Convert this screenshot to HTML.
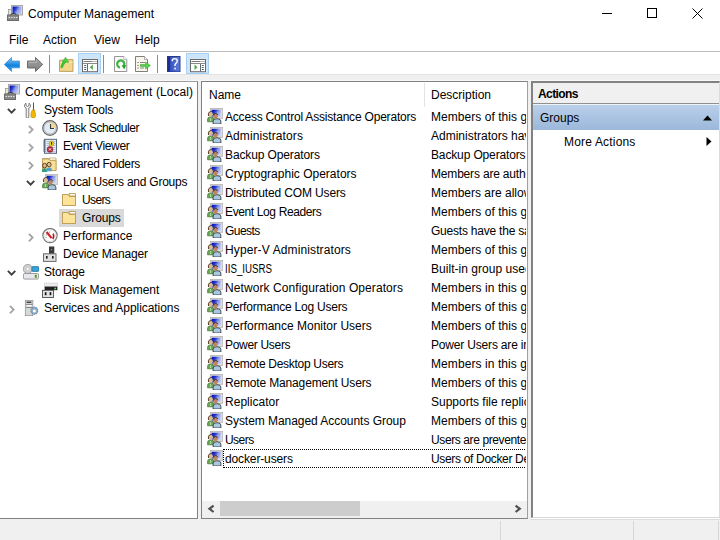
<!DOCTYPE html>
<html><head><meta charset="utf-8"><style>
*{margin:0;padding:0;box-sizing:border-box}
html,body{width:720px;height:540px;overflow:hidden;background:#f0f0f0;font-family:"Liberation Sans",sans-serif;font-size:12px;color:#000}
.a{position:absolute;white-space:nowrap}
.t{position:absolute;white-space:nowrap;line-height:14px}
svg{position:absolute;overflow:visible}
</style></head><body>

<svg width="0" height="0" style="position:absolute">
<defs>
<linearGradient id="scr" x1="0" y1="0" x2="1" y2="0.5"><stop offset="0" stop-color="#0008b0"/><stop offset="0.4" stop-color="#2a3ad0"/><stop offset="0.65" stop-color="#8c9ae8"/><stop offset="1" stop-color="#b8c2f0"/></linearGradient>
<linearGradient id="blu" x1="0" y1="0" x2="0" y2="1"><stop offset="0" stop-color="#8ed2fa"/><stop offset="0.55" stop-color="#1282dc"/><stop offset="1" stop-color="#48a8ec"/></linearGradient>
<linearGradient id="gry" x1="0" y1="0" x2="0" y2="1"><stop offset="0" stop-color="#a6a6a6"/><stop offset="1" stop-color="#7e7e7e"/></linearGradient>
<symbol id="grp" viewBox="0 0 16 16">
 <rect x="3.3" y="0.3" width="12.6" height="10" fill="#d4d4d4" stroke="#a8a8a8" stroke-width="0.6"/>
 <rect x="4.7" y="1.8" width="9.3" height="7.2" fill="url(#scr)"/>
 <path d="M14 1.8 v7.2 h-9.3" fill="none" stroke="#f0f0f0" stroke-width="0.6"/>
 <path d="M0.6 13.8 v-2.6 q0-2.3 3-2.3 q3.2 0 3.2 2.3 v2.6z" fill="#6aa858" stroke="#3e7430" stroke-width="0.7"/>
 <path d="M3.6 10 v3" stroke="#c8e8c0" stroke-width="0.8"/>
 <ellipse cx="3.6" cy="6.3" rx="2.3" ry="2.5" fill="#dcbc8c"/>
 <path d="M1.6 8 q-0.8-2.6 0.6-3.8 q1-0.8 2.6-0.6" fill="none" stroke="#3e2c1a" stroke-width="0.9"/>
 <path d="M6.1 16 v-3 q0-2.3 3.9-2.3 q3.9 0 3.9 2.3 v3z" fill="#a8c8e2" stroke="#1a1a1a" stroke-width="0.7"/>
 <ellipse cx="8.5" cy="8.2" rx="2.1" ry="2.5" fill="#b88660"/>
 <path d="M6.5 7.2 q0.6-1.8 2.2-1.7 q1.6 0.1 2 1.6" fill="none" stroke="#4a3020" stroke-width="0.9"/>
</symbol>
<symbol id="fold" viewBox="0 0 16 16">
 <path d="M1.5 2.5 h5.5 l1.5 1.5 h6 v9.5 h-13z" fill="#f3d27a" stroke="#c1a05a"/>
 <path d="M8 1.5 h6.5 v2.5 h-6z" fill="#fff" stroke="#c1a05a"/>
 <path d="M1.5 2.5 h5.5 l1.5 2 h6 v9 h-13z" fill="#fbe39a" stroke="#bf9e58"/>
</symbol>
<symbol id="cmp" viewBox="0 0 16 16">
 <rect x="4.5" y="0.5" width="11" height="9.5" fill="#e4e4e4" stroke="#a8a8a8"/>
 <rect x="5.5" y="1.5" width="9" height="7.5" fill="url(#scr)"/>
 <rect x="1.5" y="4.5" width="3" height="6" fill="#dfe8c8" stroke="#909090" stroke-width="0.7"/>
 <path d="M3.5 9.5 q3-2 6 0" fill="none" stroke="#222" stroke-width="1"/>
 <rect x="0.5" y="10" width="11" height="5.5" fill="#8a8a8a" stroke="#6a6a6a"/>
 <path d="M1.5 12.5 h9" stroke="#e0e0e0" stroke-width="1" stroke-dasharray="1.5 1"/>
</symbol>

<symbol id="tools" viewBox="0 0 16 16">
 <path d="M3 1.2 q-1.8 1 -1.5 3 q0.3 1.5 1.7 2 v8.8 q0 1 1 1 h0.6 q1 0 1 -1 v-8.8 q1.4 -0.5 1.7 -2 q0.3 -2 -1.5 -3 v2.3 l-1.5 1 l-1.5 -1z" fill="#f4f4f4" stroke="#6e6e6e" stroke-width="0.9"/>
 <path d="M10.5 0.5 v7.5" stroke="#555" stroke-width="1"/>
 <path d="M9.2 8 h2.6 v1.5 q0.6 1 0.6 2.5 v2.5 q0 1 -1 1 h-2.4 q-1 0 -1 -1 v-2.5 q0 -1.5 0.6 -2.5z" fill="#f5b800" stroke="#c88a00" stroke-width="0.7"/>
</symbol>
<symbol id="clock" viewBox="0 0 16 16">
 <circle cx="8" cy="8" r="7.3" fill="#d4d4d4" stroke="#6a6a6a" stroke-width="1.2"/>
 <circle cx="8" cy="8" r="5.8" fill="#e2ecf6" stroke="#a8a8a8" stroke-width="0.5"/>
 <path d="M8 8 V2.2 A5.8 5.8 0 0 1 13.8 8z" fill="#f0d898"/>
 <path d="M8.5 4 V8.5 H12" fill="none" stroke="#3a3a3a" stroke-width="1.1"/>
</symbol>
<symbol id="evt" viewBox="0 0 16 16">
 <rect x="2.5" y="1.3" width="12" height="14" fill="#e4ebf5" stroke="#58687e" stroke-width="1"/>
 <path d="M4.5 3.5 h9 M4.5 5.5 h9 M4.5 7.5 h9 M4.5 9.5 h9 M4.5 11.5 h9 M4.5 13.5 h9" stroke="#a8b8d4" stroke-width="0.8"/>
 <path d="M1 3 h3 M1 5 h3 M1 7 h3 M1 9 h3 M1 11 h3 M1 13 h3" stroke="#6a7890" stroke-width="1"/>
 <ellipse cx="9.6" cy="5.6" rx="2.4" ry="2.7" fill="#f0d820" stroke="#a89010" stroke-width="0.6"/>
 <path d="M9.6 4.1 v2.6" stroke="#222" stroke-width="1.1"/>
 <circle cx="8" cy="11.4" r="2.9" fill="#c0263a" stroke="#801020" stroke-width="0.5"/>
 <path d="M6.9 10.3 l2.2 2.2 M9.1 10.3 l-2.2 2.2" stroke="#fff" stroke-width="0.9"/>
</symbol>
<symbol id="shf" viewBox="0 0 16 16">
 <path d="M0.5 2.5 h6 l1 1 h6.5 v11 h-13.5z" fill="#f3d27a" stroke="#b89a55" stroke-width="0.8"/>
 <path d="M7.5 2 h6.5 v2.2 h-6.5z" fill="#fff" stroke="#b89a55" stroke-width="0.7"/>
 <path d="M0.5 3 h6 l1.5 1.6 h6 v9.9 h-13.5z" fill="#f9df95" stroke="#b89a55" stroke-width="0.8"/>
 <path d="M0 16 v-1.6 q0-2.2 2.6-2.2 q2.6 0 2.6 2.2 v1.6z" fill="#30a07a"/>
 <ellipse cx="2.6" cy="9.6" rx="2" ry="2.3" fill="#e6bc8c" stroke="#3a2a1a" stroke-width="0.8"/>
 <path d="M4.4 15.2 v-1.6 q0-2.2 2.7-2.2 q2.7 0 2.7 2.2 v1.6z" fill="#58a0cc"/>
 <ellipse cx="7.1" cy="8.6" rx="2" ry="2.3" fill="#e6bc8c" stroke="#3a2a1a" stroke-width="0.8"/>
</symbol>
<symbol id="perf" viewBox="0 0 16 16">
 <circle cx="8" cy="7.6" r="7.1" fill="#fff" stroke="#7a7a7a" stroke-width="1.3"/>
 <circle cx="8" cy="7.6" r="6" fill="none" stroke="#d8d8d8" stroke-width="0.8"/>
 <path d="M3.6 9.5 h1 M3.8 7 h1 M5 4.8 l0.7 0.7 M7.6 3.6 v1" stroke="#5a7a70" stroke-width="0.9"/>
 <path d="M11 5.6 q1.6 2.6 -0.2 5.4" fill="none" stroke="#a81818" stroke-width="1.5"/>
 <path d="M4.6 4 L9.6 10.2" stroke="#d0182a" stroke-width="2"/>
</symbol>
<symbol id="dev" viewBox="0 0 16 16">
 <rect x="7" y="0.5" width="5.3" height="7.5" fill="#3a3a3a"/>
 <rect x="9.2" y="3.3" width="0.9" height="0.9" fill="#ddd"/>
 <rect x="1.5" y="7.8" width="12.5" height="7.6" fill="#e0e0e0" stroke="#6a6a6a" stroke-width="1"/>
 <rect x="4" y="10" width="1.6" height="2.6" fill="#1a1a1a"/>
 <rect x="10" y="10" width="1.6" height="2.6" fill="#1a1a1a"/>
</symbol>
<symbol id="stor" viewBox="0 0 16 16">
 <circle cx="4.8" cy="5" r="4.6" fill="#cfcfcf" stroke="#8a8a8a" stroke-width="0.7"/>
 <circle cx="4.8" cy="5" r="1" fill="#fff"/>
 <rect x="8.9" y="2.6" width="7" height="4.8" rx="1" fill="#3aa0d8" stroke="#1a6890" stroke-width="0.7"/>
 <rect x="0.4" y="9.5" width="15.2" height="5.6" rx="1.3" fill="#e8e8ec" stroke="#888" stroke-width="0.8"/>
 <rect x="11.8" y="10.8" width="2" height="3" fill="#4a9a2a"/>
</symbol>
<symbol id="disk" viewBox="0 0 16 16">
 <rect x="2.6" y="1" width="12.8" height="3.8" fill="#ececec" stroke="#c4c4c4" stroke-width="0.5"/>
 <rect x="2.6" y="4.6" width="12.8" height="3.6" fill="#202020"/>
 <circle cx="13.2" cy="6.4" r="1" fill="#44dd44"/>
 <rect x="0.5" y="8.3" width="11" height="7.2" fill="#e4e4e4" stroke="#4a4a4a" stroke-width="0.9"/>
 <rect x="2.8" y="10.2" width="1.7" height="3" fill="#111"/>
 <rect x="7.6" y="10.2" width="1.7" height="3" fill="#111"/>
</symbol>
<symbol id="svc" viewBox="0 0 16 16">
 <rect x="2.3" y="0.3" width="7.6" height="15.4" fill="#d6dad6" stroke="#8a8a8a" stroke-width="0.7"/>
 <rect x="3.6" y="1.6" width="4.8" height="1.2" fill="#222"/>
 <path d="M3 4.4 h6.4 M3 7.5 h6.4" stroke="#7a7a7a" stroke-width="0.9"/>
 <path d="M3.6 5.8 h4.8" stroke="#fff" stroke-width="1.2"/>
 <path d="M11.4 6.6 l0.9 1.1 l1.4-0.3 l0.2 1.4 l1.2 0.7 l-0.7 1.2 l0.7 1.2 l-1.2 0.7 l-0.2 1.4 l-1.4-0.3 l-0.9 1.1 l-0.9-1.1 l-1.4 0.3 l-0.2-1.4 l-1.2-0.7 l0.7-1.2 l-0.7-1.2 l1.2-0.7 l0.2-1.4 l1.4 0.3z" fill="#8eacc8" stroke="#5a7a9a" stroke-width="0.6"/>
 <circle cx="11.4" cy="11.1" r="1.5" fill="#fff"/>
</symbol>
<symbol id="back" viewBox="0 0 16 16">
 <path d="M0.3 8.5 L7.5 1.6 V5.1 H15.6 V11.8 H7.5 V15.4z" fill="url(#blu)" stroke="#3a90d8" stroke-width="0.8"/>
</symbol>
<symbol id="fwd" viewBox="0 0 16 16">
 <path d="M15.7 8.5 L8.5 1.5 V5 H0.5 V12 H8.5 V15.5z" fill="url(#gry)" stroke="#606060" stroke-width="0.9"/>
 <path d="M1.5 6.2 H9.3 V3.6" fill="none" stroke="#c8c8c8" stroke-width="0.7"/>
</symbol>
<symbol id="upf" viewBox="0 0 16 16">
 <path d="M0.5 4.2 h6.5 l0.8 -0.6 h6.2 v11.8 h-13.5z" fill="#f3d68a" stroke="#b89860" stroke-width="0.9"/>
 <path d="M1.3 6.4 h12.5" stroke="#fbe8b0" stroke-width="1"/>
 <path d="M2.8 10.8 q0.6-2.6 2.8-5" fill="none" stroke="#3fbf3a" stroke-width="2.8" stroke-linecap="round"/>
 <path d="M3 6 L6.6 1.2 L9.8 6.4z" fill="#4acb42" stroke="#38a834" stroke-width="0.5"/>
</symbol>
<symbol id="win1" viewBox="0 0 16 16">
 <rect x="0.5" y="0.5" width="15" height="12.2" fill="#fff" stroke="#6a6a6a" stroke-width="1"/>
 <path d="M1.5 2.5 h9" stroke="#7a7a7a" stroke-width="1"/>
 <rect x="11.5" y="2" width="1" height="1" fill="#6a6a6a"/><rect x="13.5" y="2" width="1" height="1" fill="#6a6a6a"/>
 <path d="M1 4.5 h14" stroke="#8a8a8a" stroke-width="1"/>
 <path d="M5.5 5 V12.7" stroke="#6a6a6a" stroke-width="1"/>
 <path d="M2.2 6.5 h2 M2.2 8.5 h2 M2.2 10.5 h2" stroke="#56607a" stroke-width="1"/>
 <path d="M7.8 8.3 L10.8 5.6 V11z" fill="#4aaa4a"/>
</symbol>
<symbol id="win2" viewBox="0 0 16 16">
 <rect x="0.5" y="0.5" width="15" height="12.2" fill="#fff" stroke="#6a6a6a" stroke-width="1"/>
 <path d="M1.5 2.5 h9" stroke="#7a7a7a" stroke-width="1"/>
 <rect x="11.5" y="2" width="1" height="1" fill="#6a6a6a"/><rect x="13.5" y="2" width="1" height="1" fill="#6a6a6a"/>
 <path d="M1 4.5 h14" stroke="#8a8a8a" stroke-width="1"/>
 <path d="M10.5 5 V12.7" stroke="#6a6a6a" stroke-width="1"/>
 <path d="M11.8 6.5 h2 M11.8 8.5 h2 M11.8 10.5 h2" stroke="#56607a" stroke-width="1"/>
 <path d="M4.5 5.6 L7.5 8.3 L4.5 11z" fill="#4aaa4a"/>
</symbol>
<symbol id="refr" viewBox="0 0 16 16">
 <path d="M0.5 0.5 h9.3 l3 3 v12 h-12.3z" fill="#fafafa" stroke="#8a8a8a" stroke-width="0.9"/>
 <path d="M9.8 0.5 v3 h3" fill="#fff" stroke="#a0a0a0" stroke-width="0.7"/>
 <path d="M6 11.6 A3.6 3.6 0 1 1 9.3 10.6" fill="none" stroke="#40b444" stroke-width="2.3"/>
 <path d="M7.6 9.4 L12.3 9.2 L10.2 13.2z" fill="#22a028"/>
</symbol>
<symbol id="expl" viewBox="0 0 16 16">
 <path d="M0.5 0.5 h9 l3 3 v12 h-12z" fill="#f8f6ea" stroke="#707070" stroke-width="0.9"/>
 <path d="M9.5 0.5 v3 h3" fill="#fff" stroke="#909090" stroke-width="0.7"/>
 <path d="M2.6 6.5 h0.9 M2.6 9.4 h0.9 M2.6 12 h0.9" stroke="#333" stroke-width="1"/>
 <path d="M5 6.5 h5 M5 9.4 h5 M5 12 h4" stroke="#777" stroke-width="0.9"/>
 <path d="M5.5 8.5 h5 v-2.5 l5 3.5 l-5 3.5 v-2.5 h-5z" fill="#58d048" stroke="#3aa030" stroke-width="0.5"/>
</symbol>
<symbol id="help" viewBox="0 0 16 16">
 <linearGradient id="hg" x1="0" y1="0" x2="1" y2="0"><stop offset="0" stop-color="#2a44b0"/><stop offset="1" stop-color="#6080e0"/></linearGradient>
 <rect x="0.5" y="0.5" width="12.5" height="15.5" fill="url(#hg)" stroke="#1d2f80" stroke-width="0.9"/>
 <rect x="1" y="1" width="2" height="14.5" fill="#1e2e90"/>
 <path d="M5.2 5.2 q0-2.6 2.5-2.6 q2.6 0 2.6 2.5 q0 1.4-1.4 2.2 q-0.9 0.6-0.9 1.8 v1" fill="none" stroke="#fff" stroke-width="1.4"/>
 <rect x="7.3" y="11.6" width="1.5" height="1.8" fill="#fff"/>
</symbol>
</defs></svg>
<div class="a" style="left:0;top:0;width:720px;height:28px;background:#fff"></div>
<svg style="left:7px;top:5px" width="16" height="16"><use href="#cmp"/></svg>
<div class="t" style="left:28px;top:7px">Computer Management</div>
<div class="a" style="left:602px;top:13px;width:10px;height:1px;background:#000"></div>
<div class="a" style="left:647px;top:8px;width:10px;height:10px;border:1px solid #000"></div>
<svg style="left:692px;top:8px" width="11" height="11"><path d="M0.5 0.5 L10.5 10.5 M10.5 0.5 L0.5 10.5" stroke="#000" stroke-width="1"/></svg>
<div class="a" style="left:0;top:28px;width:720px;height:23px;background:#fff"></div>
<div class="t" style="left:9px;top:33px">File</div>
<div class="t" style="left:43px;top:33px">Action</div>
<div class="t" style="left:94px;top:33px">View</div>
<div class="t" style="left:135px;top:33px">Help</div>
<div class="a" style="left:0;top:51px;width:720px;height:1px;background:#bcbcbc"></div>
<div class="a" style="left:0;top:52px;width:720px;height:22px;background:#fff"></div>
<div class="a" style="left:0;top:74px;width:720px;height:1px;background:#e3e3e3"></div>
<div class="a" style="left:0;top:80px;width:720px;height:1px;background:#f7f7f9"></div>
<svg style="left:4px;top:56px" width="16" height="16"><use href="#back"/></svg>
<svg style="left:27px;top:56px" width="16" height="16"><use href="#fwd"/></svg>
<div class="a" style="left:49px;top:55px;width:1px;height:18px;background:#8c8c8c"></div>
<div class="a" style="left:103px;top:55px;width:1px;height:18px;background:#8c8c8c"></div>
<div class="a" style="left:157px;top:55px;width:1px;height:18px;background:#8c8c8c"></div>
<svg style="left:59px;top:56px" width="16" height="16"><use href="#upf"/></svg>
<div class="a" style="left:78px;top:53px;width:23px;height:21px;background:#cde5f8;border:1px solid #a6d0f4"></div>
<svg style="left:82px;top:59px" width="16" height="16"><use href="#win1"/></svg>
<svg style="left:114px;top:56px" width="16" height="16"><use href="#refr"/></svg>
<svg style="left:135px;top:56px" width="16" height="16"><use href="#expl"/></svg>
<svg style="left:167px;top:56px" width="16" height="16"><use href="#help"/></svg>
<div class="a" style="left:186px;top:53px;width:23px;height:21px;background:#cde5f8;border:1px solid #a6d0f4"></div>
<svg style="left:190px;top:59px" width="16" height="16"><use href="#win2"/></svg>
<div class="a" style="left:0;top:81px;width:198px;height:438px;background:#fff;border-top:1px solid #a0a0a0;border-right:1px solid #828282;border-bottom:1px solid #828282"></div>
<div class="a" style="left:201px;top:81px;width:327px;height:438px;background:#fff;border:1px solid #828282;border-right-color:#a0a0a0"></div>
<div class="a" style="left:531px;top:81px;width:189px;height:437px;background:#fff;border-top:2px solid #828282;border-left:2px solid #828282;border-right:1px solid #dcdcdc;border-bottom:1px solid #d8d8d8"></div>
<div class="a" style="left:531px;top:518px;width:189px;height:1px;background:#fff"></div>
<div class="a" style="left:531px;top:519px;width:189px;height:1px;background:#dcdcdc"></div>
<div class="a" style="left:59px;top:209px;width:65px;height:18px;background:#d9d9d9"></div>
<svg style="left:4px;top:84px" width="16" height="16"><use href="#cmp"/></svg>
<div class="t" style="left:25px;top:85px;letter-spacing:0.077px">Computer Management (Local)</div>
<svg style="left:23px;top:102px" width="16" height="16"><use href="#tools"/></svg>
<div class="t" style="left:44px;top:103px;letter-spacing:-0.164px">System Tools</div>
<svg style="left:7px;top:108px" width="10" height="6"><path d="M0.9 0.9 L4.6 4.6 L8.3 0.9" fill="none" stroke="#404040" stroke-width="1.9"/></svg>
<svg style="left:42px;top:120px" width="16" height="16"><use href="#clock"/></svg>
<div class="t" style="left:63px;top:121px;letter-spacing:-0.423px">Task Scheduler</div>
<svg style="left:28px;top:125px" width="6" height="10"><path d="M0.9 0.9 L4.6 4.6 L0.9 8.3" fill="none" stroke="#a6a6a6" stroke-width="1.9"/></svg>
<svg style="left:42px;top:138px" width="16" height="16"><use href="#evt"/></svg>
<div class="t" style="left:63px;top:139px;letter-spacing:-0.341px">Event Viewer</div>
<svg style="left:28px;top:143px" width="6" height="10"><path d="M0.9 0.9 L4.6 4.6 L0.9 8.3" fill="none" stroke="#a6a6a6" stroke-width="1.9"/></svg>
<svg style="left:42px;top:156px" width="16" height="16"><use href="#shf"/></svg>
<div class="t" style="left:63px;top:157px;letter-spacing:-0.365px">Shared Folders</div>
<svg style="left:28px;top:161px" width="6" height="10"><path d="M0.9 0.9 L4.6 4.6 L0.9 8.3" fill="none" stroke="#a6a6a6" stroke-width="1.9"/></svg>
<svg style="left:42px;top:174px" width="16" height="16"><use href="#grp"/></svg>
<div class="t" style="left:63px;top:175px;letter-spacing:-0.233px">Local Users and Groups</div>
<svg style="left:26px;top:180px" width="10" height="6"><path d="M0.9 0.9 L4.6 4.6 L8.3 0.9" fill="none" stroke="#404040" stroke-width="1.9"/></svg>
<svg style="left:61px;top:192px" width="16" height="16"><use href="#fold"/></svg>
<div class="t" style="left:82px;top:193px;letter-spacing:-0.625px">Users</div>
<svg style="left:61px;top:210px" width="16" height="16"><use href="#fold"/></svg>
<div class="t" style="left:82px;top:211px;letter-spacing:-0.1px">Groups</div>
<svg style="left:42px;top:228px" width="16" height="16"><use href="#perf"/></svg>
<div class="t" style="left:63px;top:229px;letter-spacing:0.07px">Performance</div>
<svg style="left:28px;top:233px" width="6" height="10"><path d="M0.9 0.9 L4.6 4.6 L0.9 8.3" fill="none" stroke="#a6a6a6" stroke-width="1.9"/></svg>
<svg style="left:42px;top:246px" width="16" height="16"><use href="#dev"/></svg>
<div class="t" style="left:63px;top:247px;letter-spacing:-0.177px">Device Manager</div>
<svg style="left:23px;top:264px" width="16" height="16"><use href="#stor"/></svg>
<div class="t" style="left:44px;top:265px;letter-spacing:-0.2px">Storage</div>
<svg style="left:7px;top:270px" width="10" height="6"><path d="M0.9 0.9 L4.6 4.6 L8.3 0.9" fill="none" stroke="#404040" stroke-width="1.9"/></svg>
<svg style="left:42px;top:282px" width="16" height="16"><use href="#disk"/></svg>
<div class="t" style="left:63px;top:283px;letter-spacing:-0.029px">Disk Management</div>
<svg style="left:23px;top:300px" width="16" height="16"><use href="#svc"/></svg>
<div class="t" style="left:44px;top:301px;letter-spacing:-0.054px">Services and Applications</div>
<svg style="left:9px;top:305px" width="6" height="10"><path d="M0.9 0.9 L4.6 4.6 L0.9 8.3" fill="none" stroke="#a6a6a6" stroke-width="1.9"/></svg>
<div class="t" style="left:209px;top:88px">Name</div>
<div class="a" style="left:424px;top:83px;width:1px;height:24px;background:#e3e3e3"></div>
<div class="t" style="left:431px;top:88px">Description</div>
<svg style="left:207px;top:108px" width="16" height="16"><use href="#grp"/></svg>
<div class="t" style="left:225px;top:110px;letter-spacing:-0.2px">Access Control Assistance Operators</div>
<div class="a" style="left:431px;top:108px;width:95px;height:19px;overflow:hidden"><div class="t" style="left:0;top:2px;letter-spacing:0.05px">Members of this group can remotely query authorization attributes and permissions for resources on this computer.</div></div>
<svg style="left:207px;top:127px" width="16" height="16"><use href="#grp"/></svg>
<div class="t" style="left:225px;top:129px;letter-spacing:0.092px">Administrators</div>
<div class="a" style="left:431px;top:127px;width:95px;height:19px;overflow:hidden"><div class="t" style="left:0;top:2px;letter-spacing:0px">Administrators have complete and unrestricted access to the computer/domain</div></div>
<svg style="left:207px;top:146px" width="16" height="16"><use href="#grp"/></svg>
<div class="t" style="left:225px;top:148px;letter-spacing:-0.12px">Backup Operators</div>
<div class="a" style="left:431px;top:146px;width:95px;height:19px;overflow:hidden"><div class="t" style="left:0;top:2px;letter-spacing:-0.14px">Backup Operators can override security restrictions for the sole purpose of backing up or restoring files</div></div>
<svg style="left:207px;top:165px" width="16" height="16"><use href="#grp"/></svg>
<div class="t" style="left:225px;top:167px;letter-spacing:0.009px">Cryptographic Operators</div>
<div class="a" style="left:431px;top:165px;width:95px;height:19px;overflow:hidden"><div class="t" style="left:0;top:2px;letter-spacing:-0.18px">Members are authorized to perform cryptographic operations.</div></div>
<svg style="left:207px;top:184px" width="16" height="16"><use href="#grp"/></svg>
<div class="t" style="left:225px;top:186px;letter-spacing:-0.125px">Distributed COM Users</div>
<div class="a" style="left:431px;top:184px;width:95px;height:19px;overflow:hidden"><div class="t" style="left:0;top:2px;letter-spacing:0px">Members are allowed to launch, activate and use Distributed COM objects on this machine.</div></div>
<svg style="left:207px;top:203px" width="16" height="16"><use href="#grp"/></svg>
<div class="t" style="left:225px;top:205px;letter-spacing:-0.375px">Event Log Readers</div>
<div class="a" style="left:431px;top:203px;width:95px;height:19px;overflow:hidden"><div class="t" style="left:0;top:2px;letter-spacing:0.05px">Members of this group can read event logs from local machine</div></div>
<svg style="left:207px;top:222px" width="16" height="16"><use href="#grp"/></svg>
<div class="t" style="left:225px;top:224px;letter-spacing:-0.56px">Guests</div>
<div class="a" style="left:431px;top:222px;width:95px;height:19px;overflow:hidden"><div class="t" style="left:0;top:2px;letter-spacing:-0.22px">Guests have the same access as members of the Users group by default, except for the Guest account which is further restricted</div></div>
<svg style="left:207px;top:241px" width="16" height="16"><use href="#grp"/></svg>
<div class="t" style="left:225px;top:243px;letter-spacing:0.119px">Hyper-V Administrators</div>
<div class="a" style="left:431px;top:241px;width:95px;height:19px;overflow:hidden"><div class="t" style="left:0;top:2px;letter-spacing:0.05px">Members of this group have complete and unrestricted access to all features of Hyper-V.</div></div>
<svg style="left:207px;top:260px" width="16" height="16"><use href="#grp"/></svg>
<div class="t" style="left:225px;top:262px;transform:scaleX(0.81);transform-origin:0 0">IIS_IUSRS</div>
<div class="a" style="left:431px;top:260px;width:95px;height:19px;overflow:hidden"><div class="t" style="left:0;top:2px;letter-spacing:0.03px">Built-in group used by Internet Information Services.</div></div>
<svg style="left:207px;top:279px" width="16" height="16"><use href="#grp"/></svg>
<div class="t" style="left:225px;top:281px;letter-spacing:0.083px">Network Configuration Operators</div>
<div class="a" style="left:431px;top:279px;width:95px;height:19px;overflow:hidden"><div class="t" style="left:0;top:2px;letter-spacing:0.08px">Members in this group can have some administrative privileges to manage configuration of networking features</div></div>
<svg style="left:207px;top:298px" width="16" height="16"><use href="#grp"/></svg>
<div class="t" style="left:225px;top:300px;letter-spacing:-0.205px">Performance Log Users</div>
<div class="a" style="left:431px;top:298px;width:95px;height:19px;overflow:hidden"><div class="t" style="left:0;top:2px;letter-spacing:0.05px">Members of this group may schedule logging of performance counters, enable trace providers, and collect event traces both locally and via remote access to this computer</div></div>
<svg style="left:207px;top:317px" width="16" height="16"><use href="#grp"/></svg>
<div class="t" style="left:225px;top:319px;letter-spacing:0.0px">Performance Monitor Users</div>
<div class="a" style="left:431px;top:317px;width:95px;height:19px;overflow:hidden"><div class="t" style="left:0;top:2px;letter-spacing:0.05px">Members of this group can access performance counter data locally and remotely</div></div>
<svg style="left:207px;top:336px" width="16" height="16"><use href="#grp"/></svg>
<div class="t" style="left:225px;top:338px;letter-spacing:-0.31px">Power Users</div>
<div class="a" style="left:431px;top:336px;width:95px;height:19px;overflow:hidden"><div class="t" style="left:0;top:2px;letter-spacing:-0.18px">Power Users are included for backwards compatibility and possess limited administrative rights</div></div>
<svg style="left:207px;top:355px" width="16" height="16"><use href="#grp"/></svg>
<div class="t" style="left:225px;top:357px;letter-spacing:-0.289px">Remote Desktop Users</div>
<div class="a" style="left:431px;top:355px;width:95px;height:19px;overflow:hidden"><div class="t" style="left:0;top:2px;letter-spacing:0.08px">Members in this group are granted the right to logon remotely</div></div>
<svg style="left:207px;top:374px" width="16" height="16"><use href="#grp"/></svg>
<div class="t" style="left:225px;top:376px;letter-spacing:-0.159px">Remote Management Users</div>
<div class="a" style="left:431px;top:374px;width:95px;height:19px;overflow:hidden"><div class="t" style="left:0;top:2px;letter-spacing:0.05px">Members of this group can access WMI resources over management protocols (such as WS-Management via the Windows Remote Management service).</div></div>
<svg style="left:207px;top:393px" width="16" height="16"><use href="#grp"/></svg>
<div class="t" style="left:225px;top:395px;letter-spacing:0.033px">Replicator</div>
<div class="a" style="left:431px;top:393px;width:95px;height:19px;overflow:hidden"><div class="t" style="left:0;top:2px;letter-spacing:0px">Supports file replication in a domain</div></div>
<svg style="left:207px;top:412px" width="16" height="16"><use href="#grp"/></svg>
<div class="t" style="left:225px;top:414px;letter-spacing:-0.046px">System Managed Accounts Group</div>
<div class="a" style="left:431px;top:412px;width:95px;height:19px;overflow:hidden"><div class="t" style="left:0;top:2px;letter-spacing:0.05px">Members of this group are managed by the system.</div></div>
<svg style="left:207px;top:431px" width="16" height="16"><use href="#grp"/></svg>
<div class="t" style="left:225px;top:433px;letter-spacing:-0.55px">Users</div>
<div class="a" style="left:431px;top:431px;width:95px;height:19px;overflow:hidden"><div class="t" style="left:0;top:2px;letter-spacing:-0.39px">Users are prevented from making accidental or intentional system-wide changes and can run most applications</div></div>
<svg style="left:207px;top:450px" width="16" height="16"><use href="#grp"/></svg>
<div class="t" style="left:225px;top:452px;letter-spacing:-0.127px">docker-users</div>
<div class="a" style="left:431px;top:450px;width:95px;height:19px;overflow:hidden"><div class="t" style="left:0;top:2px;letter-spacing:-0.33px">Users of Docker Desktop</div></div>
<div class="a" style="left:533px;top:83px;width:186px;height:20px;background:#f0f0f0"></div>
<div class="a" style="left:533px;top:103px;width:186px;height:1px;background:#909090"></div>
<div class="a" style="left:533px;top:104px;width:186px;height:1px;background:#eef4fa"></div>
<div class="a" style="left:533px;top:105px;width:186px;height:25px;background:linear-gradient(#b9d0ea,#9cb7da)"></div>
<div class="t" style="left:538px;top:87px;font-weight:bold;letter-spacing:-0.6px">Actions</div>
<div class="t" style="left:540px;top:111px">Groups</div>
<div class="t" style="left:564px;top:135px;letter-spacing:0.18px">More Actions</div>
<svg style="left:703px;top:115px" width="10" height="6"><path d="M0 5.5 L4.5 0.5 L9 5.5z" fill="#000"/></svg>
<svg style="left:706px;top:137px" width="6" height="10"><path d="M0.5 0 L5.5 4.5 L0.5 9z" fill="#000"/></svg>
<div class="a" style="left:202px;top:501px;width:325px;height:17px;background:#f0f0f0"></div>
<div class="a" style="left:220px;top:501px;width:140px;height:15px;background:#cdcdcd"></div>
<svg style="left:208px;top:505px" width="7" height="8"><path d="M5.6 0.6 L1.4 3.8 L5.6 7" fill="none" stroke="#505050" stroke-width="2.2"/></svg>
<svg style="left:515px;top:505px" width="7" height="8"><path d="M0.6 0.6 L4.8 3.8 L0.6 7" fill="none" stroke="#505050" stroke-width="2.2"/></svg>
<div class="a" style="left:223px;top:449px;width:302px;height:19px;border:1px dotted #000;border-right:none"></div>
<div class="a" style="left:500px;top:521px;width:1px;height:19px;background:#d7d7d7"></div>
<div class="a" style="left:633px;top:521px;width:1px;height:19px;background:#d7d7d7"></div>
<div class="a" style="left:718px;top:521px;width:1px;height:19px;background:#d7d7d7"></div>
</body></html>
